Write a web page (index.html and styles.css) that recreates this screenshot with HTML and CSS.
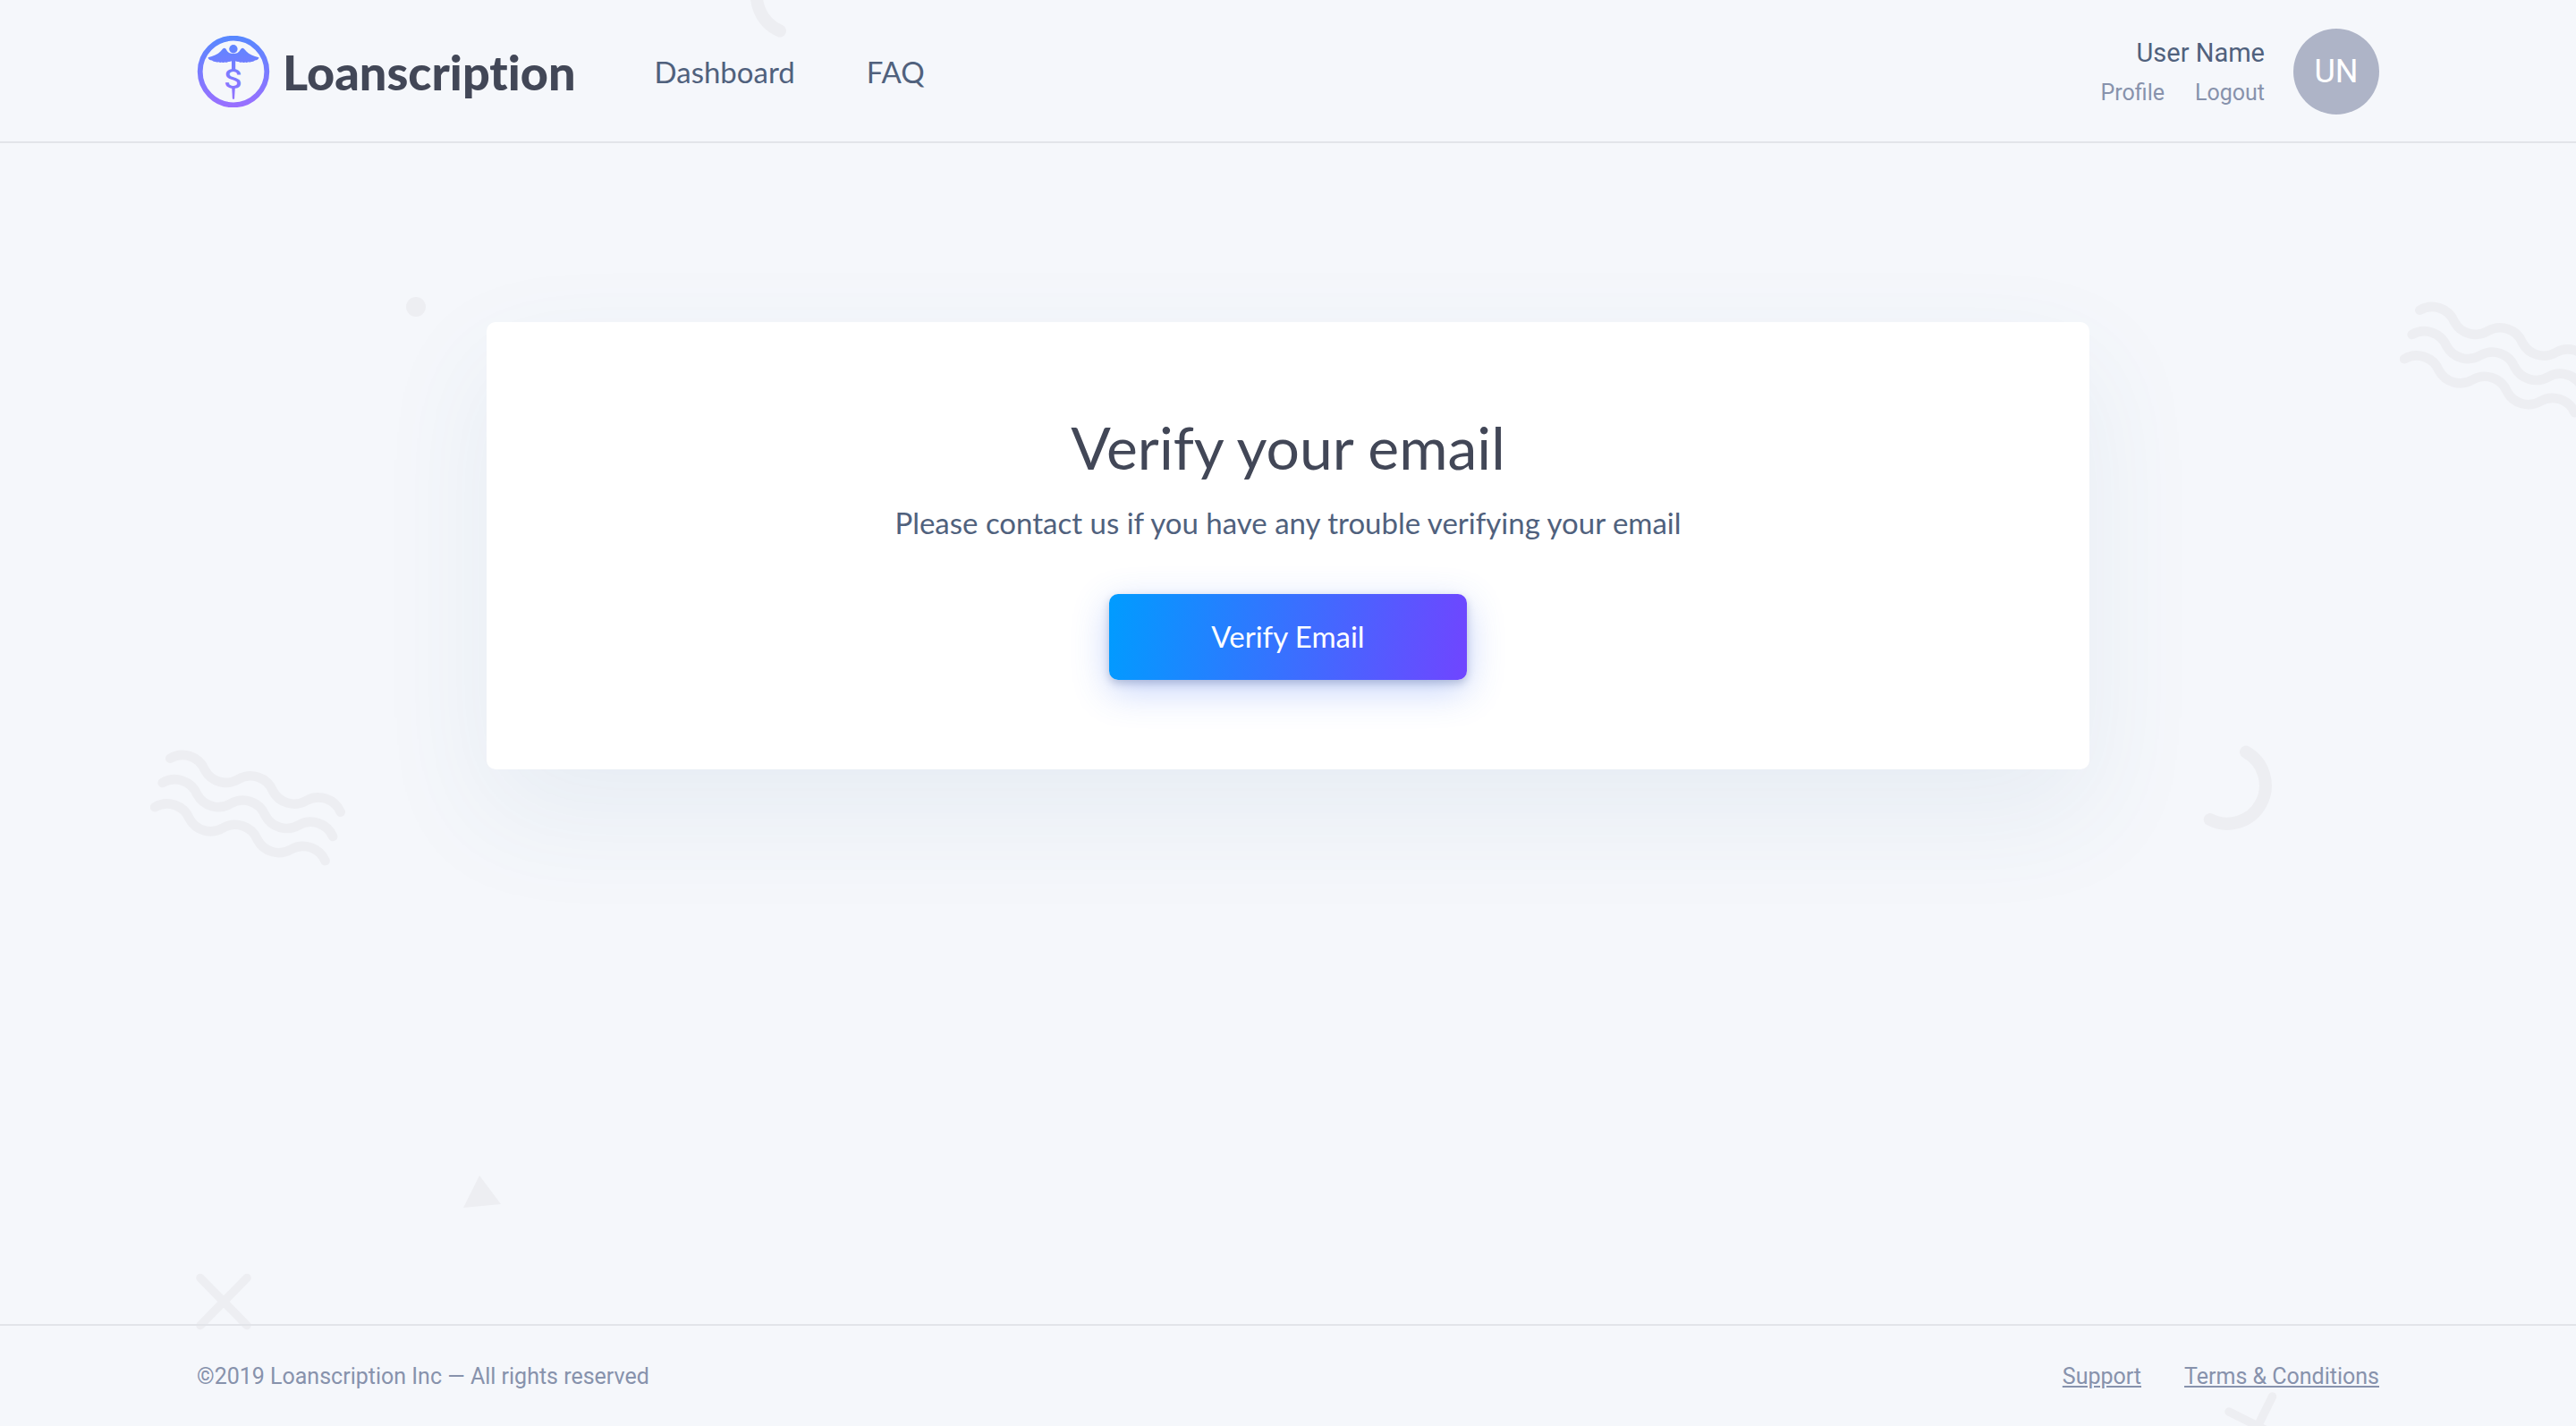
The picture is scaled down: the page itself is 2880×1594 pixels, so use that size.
FILE: index.html
```html
<!DOCTYPE html>
<html lang="en">
<head>
<meta charset="utf-8">
<meta name="viewport" content="width=device-width, initial-scale=1">
<title>Verify your email – Loanscription</title>
<link rel="stylesheet" href="styles.css">
</head>
<body>
<div class="decor" aria-hidden="true">
  <svg class="shape shape-arc-top" width="100" height="100" viewBox="0 0 100 100"><path d="M67 10.500A43 43 0 1 0 33 89.500" stroke-width="14"/></svg>
  <svg class="shape shape-dot" width="22" height="22" viewBox="0 0 22 22"><circle cx="11" cy="11" r="11"/></svg>
  <svg class="shape shape-waves-right" width="204" height="136" viewBox="0 0 204 136"><g stroke-width="10.600"><path id="wave" d="M22.300 9.700A27 27 0 0 1 61 22.700A27 27 0 0 0 98.500 33A27 27 0 0 1 137 46A27 27 0 0 0 174.500 57A27 27 0 0 1 212.700 69.700"/><use href="#wave" x="-8.600" y="27.300"/><use href="#wave" x="-17.200" y="54.500"/></g></svg>
  <svg class="shape shape-waves-left" width="236" height="136" viewBox="0 0 236 136"><g stroke-width="10.600"><use href="#wave"/><use href="#wave" x="-8.600" y="27.300"/><use href="#wave" x="-17.200" y="54.500"/></g></svg>
  <svg class="shape shape-arc-right" width="104" height="104" viewBox="0 0 104 104"><path d="M71 12.600A42.800 42.800 0 0 1 30.700 88.100" stroke-width="14"/></svg>
  <svg class="shape shape-triangle" width="42" height="38" viewBox="0 0 42 38"><path class="solid" d="M18 0L42 32L0 36Z"/></svg>
  <svg class="shape shape-cross" width="62" height="64" viewBox="0 0 62 64"><path d="M5 5.500L57 58.500M57 5.500L5 58.500" stroke-width="9.500"/></svg>
  <svg class="shape shape-cross-low" width="76" height="76" viewBox="0 0 76 76"><path d="M6 22L70 54M54.500 5L22 71" stroke-width="9.500"/></svg>
</div>

<header class="site-header">
  <a class="brand" href="#">
    <svg class="brand-mark" width="82" height="80" viewBox="0 0 81 80" aria-hidden="true">
      <defs><linearGradient id="mark" gradientUnits="userSpaceOnUse" x1="0" y1="0" x2="0" y2="80"><stop offset="0" stop-color="#5788ff"/><stop offset="1" stop-color="#9a6fff"/></linearGradient></defs>
      <circle cx="40.500" cy="40" r="37.300" fill="none" stroke="url(#mark)" stroke-width="5.800"/>
      <g fill="url(#mark)">
        <circle cx="40.400" cy="14.700" r="4.700"/>
        <path d="M12 24.300C18 23 23 20.500 26 17.500C28 15.300 29 13.800 30.300 13.800C32.600 13.800 33 18 36 19.200C38.500 20.200 42.300 20.200 44.800 19.200C47.800 18 48.300 13.800 50.600 13.800C51.900 13.800 53 15.300 55 17.500C58 20.500 62.800 23 69 24.300C68.500 26.500 66.500 27.400 64.500 27.600C63.500 28.800 62 29.200 60.500 28.900C59.500 29.700 58 29.800 57 29.300C56 30.100 54.500 30 53.500 29.500C52.500 30.200 51 30.100 50 29.600C48.500 30.100 47.500 29.600 46.500 28.900C45 29.300 44 28.900 42.700 28.200V38H38.500V28.200C37 28.900 36 29.300 34.500 28.900C33.500 29.600 32.500 30.100 31 29.600C30 30.100 28.500 30.200 27.500 29.500C26.500 30 25 30.100 24 29.300C23 29.800 21.500 29.700 20.500 28.900C19 29.200 17.500 28.800 16.500 27.600C14.500 27.400 12.500 26.500 12 24.300Z"/>
        <path d="M38.700 58H42.300L41.600 70C41.400 71.300 39.600 71.300 39.400 70Z"/>
        <text class="brand-dollar" x="40" y="59" text-anchor="middle">S</text>
      </g>
    </svg>
    <span class="brand-name">Loanscription</span>
  </a>
  <nav class="main-nav">
    <a href="#">Dashboard</a>
    <a href="#">FAQ</a>
  </nav>
  <div class="account">
    <div class="account-text">
      <div class="account-name">User Name</div>
      <div class="account-links"><a href="#">Profile</a><a href="#">Logout</a></div>
    </div>
    <div class="avatar">UN</div>
  </div>
</header>

<main class="content">
  <section class="card">
    <h1 class="card-title">Verify your email</h1>
    <p class="card-text">Please contact us if you have any trouble verifying your email</p>
    <button class="verify-button" type="button">Verify Email</button>
  </section>
</main>

<footer class="site-footer">
  <p class="copyright">©2019 Loanscription Inc — All rights reserved</p>
  <nav class="footer-links">
    <a href="#">Support</a>
    <a href="#">Terms &amp; Conditions</a>
  </nav>
</footer>
</body>
</html>
```
FILE: styles.css
```css
* {
  box-sizing: border-box;
}

body {
  position: relative;
  display: flex;
  flex-direction: column;
  min-height: 100vh;
  margin: 0;
  background: #f5f7fb;
  color: #50617d;
  font-family: Lato, "Liberation Sans", sans-serif;
  font-size: 33px;
}

a {
  color: inherit;
  text-decoration: none;
}

/* Background shapes */
.decor {
  position: absolute;
  inset: 0;
  z-index: -1;
  overflow: hidden;
}

.shape {
  position: absolute;
  fill: none;
  stroke: #edeef2;
  stroke-linecap: round;
}

.shape .solid,
.shape circle {
  fill: #edeef2;
  stroke: none;
}

.shape-arc-top { left: 839px; top: -55px; }
.shape-dot { left: 454px; top: 332px; }
.shape-waves-right { right: -7px; top: 337px; }
.shape-waves-left { left: 168px; top: 838px; }
.shape-arc-right { right: 336px; top: 828px; }
.shape-triangle { left: 518px; bottom: 242px; }
.shape-cross { left: 219px; bottom: 107px; }
.shape-cross-low { right: 318px; bottom: -38px; }

/* Header */
.site-header {
  display: flex;
  align-items: center;
  min-height: 160px;
  padding: 2px 220px 0;
  border-bottom: 2px solid #e2e4e9;
}

.brand {
  display: flex;
  align-items: center;
  gap: 14px;
}

.brand-dollar {
  font-family: Roboto, sans-serif;
  font-size: 32px;
  font-weight: 500;
}

.brand-name {
  color: #424757;
  font-size: 54px;
  font-weight: 900;
  font-variant-ligatures: none;
}

.main-nav {
  display: flex;
  gap: 80px;
  margin-left: 88px;
}

.account {
  display: flex;
  align-items: center;
  gap: 32px;
  margin-left: auto;
  font-family: Roboto, sans-serif;
  text-align: right;
}

.account-name {
  font-size: 29px;
  line-height: 48px;
}

.account-links {
  display: flex;
  justify-content: flex-end;
  gap: 34px;
  color: #8792ac;
  font-size: 25px;
  line-height: 42px;
}

.avatar {
  display: flex;
  align-items: center;
  justify-content: center;
  width: 96px;
  height: 96px;
  border-radius: 50%;
  background: #aeb4c7;
  color: #fff;
  font-size: 36px;
}

/* Verification card */
.content {
  flex: 1;
  padding: 200px 220px;
}

.card {
  max-width: 1792px;
  margin: 0 auto;
  padding: 100px;
  border-radius: 10px;
  background: #fff;
  box-shadow: 0 48px 128px rgba(60, 110, 150, 0.08);
  text-align: center;
}

.card-title {
  margin: 0 0 20px;
  color: #424757;
  font-size: 66px;
  font-weight: 400;
  line-height: 80px;
}

.card-text {
  margin: 0 0 56px;
  line-height: 48px;
}

.verify-button {
  display: block;
  width: 400px;
  height: 96px;
  margin: 0 auto;
  padding: 0 0 2px;
  border: 0;
  border-radius: 10px;
  background: linear-gradient(98deg, #009cff, #7045ff);
  box-shadow: 0 4px 10px rgba(40, 60, 110, 0.25), 0 12px 40px rgba(60, 110, 245, 0.3);
  color: #fff;
  font: inherit;
}

/* Footer */
.site-footer {
  display: flex;
  align-items: center;
  justify-content: space-between;
  min-height: 114px;
  padding: 0 220px;
  border-top: 2px solid #e2e4e9;
  color: #8792ac;
  font-family: Roboto, sans-serif;
  font-size: 25px;
}

.copyright {
  margin: 0;
}

.footer-links {
  display: flex;
  gap: 48px;
}

.footer-links a {
  text-decoration: underline;
}
```
